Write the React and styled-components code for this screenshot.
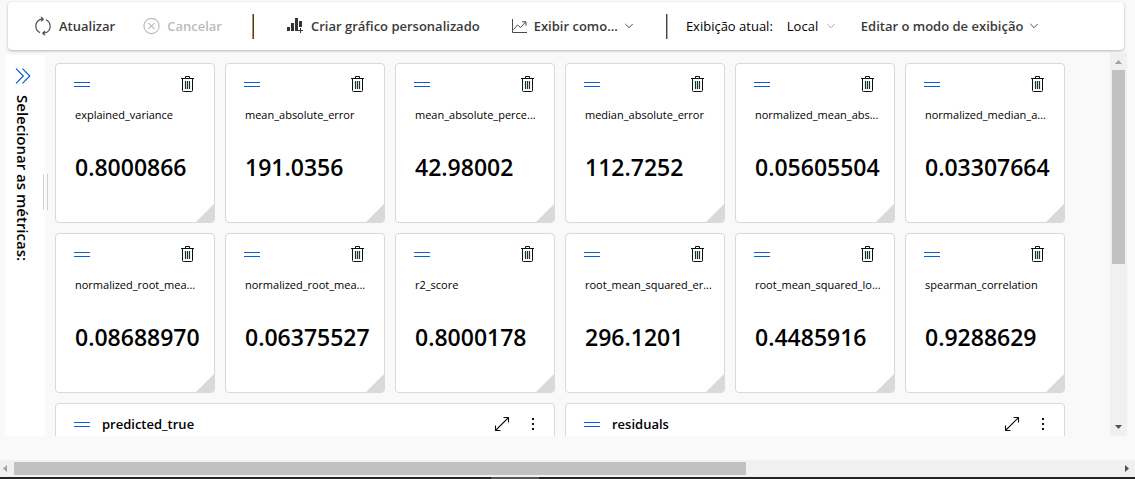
import React from "react";
import styled, { createGlobalStyle } from "styled-components";

const GlobalStyle = createGlobalStyle`
  * { box-sizing: border-box; }
  body {
    margin: 0;
    background: #f9f9f9;
    color: #000;
    font-family: "Open Sans", "Noto Sans", sans-serif;
    font-size: 13px;
    line-height: 20px;
  }
  button, select { font: inherit; color: inherit; }
  svg { display: block; flex: none; }
`;

const Page = styled.div`
  height: 100vh;
  display: flex;
  flex-direction: column;
  overflow: hidden;
`;

const Toolbar = styled.header`
  flex: none;
  display: flex;
  align-items: center;
  height: 48px;
  margin: 2px 11px 3px 8px;
  padding-left: 26px;
  background: #fff;
  border-radius: 4px;
  box-shadow: 0 1px 3px rgba(0, 0, 0, 0.28);
  white-space: nowrap;
`;

const Command = styled.button`
  display: flex;
  align-items: center;
  gap: 7px;
  margin: 0 ${(p) => p.$after || 0}px 0 0;
  padding: 0;
  border: 0;
  background: none;
  color: #3b3a39;
  font-weight: 600;
  &:disabled { color: #bdbbb9; }
`;

const Divider = styled.span`
  width: 2px;
  height: 25px;
  margin-right: ${(p) => p.$after}px;
  border-left: 1px solid ${(p) => p.$left};
  border-right: 1px solid ${(p) => p.$right};
`;

const ViewLabel = styled.label`
  margin-right: 14px;
`;

const ViewPicker = styled.span`
  display: flex;
  align-items: center;
  gap: 8px;
  margin-right: 26px;
  color: #a19f9d;
`;

const ViewSelect = styled.select`
  appearance: none;
  padding: 0;
  border: 0;
  background: none;
  color: #000;
`;

const Workspace = styled.div`
  flex: 1;
  min-height: 0;
  display: flex;
  margin: 0 8px 24px 5px;
`;

const Sidebar = styled.aside`
  position: relative;
  flex: none;
  width: 40px;
  margin-top: 2px;
  background: #fff;
  display: flex;
  flex-direction: column;
  align-items: flex-start;
  padding: 13px 0 0 10px;
  gap: 11px;
`;

const ExpandButton = styled.button`
  padding: 0;
  border: 0;
  background: none;
`;

const SidebarTitle = styled.h2`
  margin: 0;
  writing-mode: vertical-rl;
  font-size: 15px;
  line-height: 16px;
  font-weight: 600;
  white-space: nowrap;
`;

const ResizeGrip = styled.span`
  position: absolute;
  right: -3px;
  top: 119px;
  width: 5px;
  height: 36px;
  border: solid #d0d0d0;
  border-width: 0 1px;
`;

const Board = styled.main`
  flex: 1;
  min-width: 0;
  overflow: hidden;
  padding: 10px 0 0 10px;
`;

const CardGrid = styled.div`
  display: grid;
  grid-template-columns: repeat(auto-fill, 160px);
  grid-auto-rows: 160px;
  gap: 10px;
`;

const Card = styled.article`
  position: relative;
  grid-column: span ${(p) => p.$span || 1};
  min-width: 0;
  padding: 10px 10px 0 18px;
  background: #fff;
  border: 1px solid #d9d9d9;
  border-radius: 4px;
  overflow: hidden;
`;

const CardHeader = styled.div`
  display: flex;
  align-items: center;
  height: 20px;
`;

const CardActions = styled.div`
  display: flex;
  gap: 9px;
  margin-left: auto;
  padding-right: ${(p) => p.$inset || 0}px;
`;

const IconButton = styled.button`
  display: flex;
  align-items: center;
  justify-content: center;
  width: 22px;
  height: 20px;
  padding: 0;
  border: 0;
  background: none;
`;

const DragHandle = styled.span`
  width: 16px;
  height: 5px;
  border: solid #0b5cd6;
  border-width: 1px 0;
`;

const MetricName = styled.h3`
  margin: 11px 0 0 1px;
  font-size: 11px;
  line-height: 20px;
  font-weight: 400;
  white-space: nowrap;
`;

const MetricValue = styled.p`
  margin: 26px 0 0 1px;
  font-size: 23px;
  line-height: 32px;
  font-weight: 600;
`;

const ChartName = styled.h3`
  margin: 0 0 0 12px;
  font-size: 13px;
  line-height: 20px;
  font-weight: 600;
`;

const CornerGrip = styled.span`
  position: absolute;
  right: 0;
  bottom: 0;
  width: 18px;
  height: 18px;
  background: #d9d9d9;
  clip-path: polygon(100% 0, 100% 100%, 0 100%);
`;

const VerticalScroll = styled.div`
  flex: none;
  width: 17px;
  display: flex;
  flex-direction: column;
  align-items: center;
  justify-content: space-between;
  background: #f0f0f0;
  padding: 7px 0;
`;

const VerticalThumb = styled.span`
  width: 13px;
  height: 194px;
  margin: 6px 0 auto;
  background: #c1c1c1;
`;

const HorizontalScroll = styled.div`
  flex: none;
  height: 17px;
  display: flex;
  align-items: center;
  background: #f0f0f0;
  padding: 0 6px 0 3px;
`;

const HorizontalThumb = styled.span`
  width: 65%;
  height: 13px;
  margin: 0 auto 0 7px;
  background: #c1c1c1;
`;

const BottomEdge = styled.div`
  flex: none;
  height: 2px;
  background: #242424;
  display: flex;
  justify-content: center;
  padding-right: 106px;
`;

const EdgeMark = styled.span`
  width: 48px;
  background: #555;
`;

const RefreshIcon = () => (
  <svg width="18" height="20" viewBox="0 0 18 20" fill="none" stroke="#4a4a4a" strokeWidth="1.2">
    <path d="M6 16.6A7.2 7.2 0 0 1 4.500 4.500Q6 3.200 8.800 3.200M7 1l2.200 2.200L7 5.400" />
    <path d="M12 3.800A7.2 7.2 0 0 1 13.500 15.900Q12 17.200 9.200 17.200M11 15l-2.200 2.200 2.200 2.200" />
  </svg>
);

const CancelIcon = () => (
  <svg width="17" height="18" viewBox="0 0 17 18" fill="none" stroke="#bdbbb9" strokeWidth="1.1">
    <circle cx="8.500" cy="9" r="7.600" />
    <path d="M5.300 5.800l6.400 6.400M11.700 5.800l-6.400 6.400" />
  </svg>
);

const AddChartIcon = () => (
  <svg width="17" height="18" viewBox="0 0 17 18" fill="#333">
    <path d="M0 10h3v4H0zM4 6h3v8H4zM8 1h3v13H8zM12 4h3v6h-3zM13 11h1v2h2v1h-2v2h-1v-2h-2v-1h2z" />
  </svg>
);

const LineChartIcon = () => (
  <svg width="15" height="14" viewBox="0 0 15 14" fill="none" stroke="#4a4a4a">
    <path d="M.5 0v13.500H15M1.500 10.500L5.500 6l3 2.500L13.700 3M10 2.800h4v4" />
  </svg>
);

const ChevronIcon = () => (
  <svg width="8" height="6" viewBox="0 0 8 6" fill="none" stroke="currentColor" strokeWidth="0.9">
    <path d="M.3 1L4 4.700 7.700 1" />
  </svg>
);

const ExpandIcon = () => (
  <svg width="16" height="16" viewBox="0 0 16 16" fill="none" stroke="#0b5cd6" strokeWidth="1.2">
    <path d="M1 .7L8.300 8 1 15.300M7.500 .7L14.800 8 7.500 15.300" />
  </svg>
);

const TrashIcon = () => (
  <svg width="13" height="16" viewBox="0 0 13 16" fill="none" stroke="#111">
    <path d="M0 2.500h13M4.500 2.500v-2h4v2M1.500 2.500v12q0 1 1 1h8q1 0 1-1v-12" />
    <path stroke="#153a22" strokeWidth="1.2" d="M4.500 5v8M6.500 5v8M8.500 5v8" />
  </svg>
);

const EnlargeIcon = () => (
  <svg width="16" height="16" viewBox="0 0 16 16" fill="none" stroke="#111" strokeWidth="1.1">
    <path d="M1.500 14.500l13-13M9.500 1.500h5v5M1.500 9.500v5h5" />
  </svg>
);

const MoreIcon = () => (
  <svg width="4" height="14" viewBox="0 0 4 14" fill="#111">
    <path d="M1 1h2v2H1zM1 6h2v2H1zM1 11h2v2H1z" />
  </svg>
);

const arrows = {
  up: ["7", "4", "M0 4L3.500 0 7 4z", "#a3a3a3"],
  down: ["7", "4", "M0 0h7L3.500 4z", "#505050"],
  left: ["4", "7", "M4 0v7L0 3.500z", "#a3a3a3"],
  right: ["4", "7", "M0 0v7L4 3.500z", "#505050"],
};

const ScrollArrow = ({ to }) => {
  const [w, h, d, fill] = arrows[to];
  return (
    <svg width={w} height={h} viewBox={`0 0 ${w} ${h}`}>
      <path d={d} fill={fill} />
    </svg>
  );
};

const metrics = [
  ["explained_variance", "0.8000866"],
  ["mean_absolute_error", "191.0356"],
  ["mean_absolute_perce...", "42.98002"],
  ["median_absolute_error", "112.7252"],
  ["normalized_mean_abs...", "0.05605504"],
  ["normalized_median_a...", "0.03307664"],
  ["normalized_root_mea...", "0.08688970"],
  ["normalized_root_mea...", "0.06375527"],
  ["r2_score", "0.8000178"],
  ["root_mean_squared_er...", "296.1201"],
  ["root_mean_squared_lo...", "0.4485916"],
  ["spearman_correlation", "0.9288629"],
];

const charts = ["predicted_true", "residuals"];

export default function App() {
  return (
    <Page>
      <GlobalStyle />
      <Toolbar>
        <Command $after={28}>
          <RefreshIcon />
          Atualizar
        </Command>
        <Command $after={30} disabled>
          <CancelIcon />
          Cancelar
        </Command>
        <Divider $left="#e08a1e" $right="#24456e" $after={33} />
        <Command $after={32}>
          <AddChartIcon />
          Criar gráfico personalizado
        </Command>
        <Command $after={33}>
          <LineChartIcon />
          Exibir como...
          <ChevronIcon />
        </Command>
        <Divider $left="#7a3210" $right="#7fbcf5" $after={18} />
        <ViewLabel htmlFor="view">Exibição atual:</ViewLabel>
        <ViewPicker>
          <ViewSelect id="view">
            <option>Local</option>
          </ViewSelect>
          <ChevronIcon />
        </ViewPicker>
        <Command>
          Editar o modo de exibição
          <ChevronIcon />
        </Command>
      </Toolbar>
      <Workspace>
        <Sidebar>
          <ExpandButton aria-label="Expandir">
            <ExpandIcon />
          </ExpandButton>
          <SidebarTitle>Selecionar as métricas:</SidebarTitle>
          <ResizeGrip />
        </Sidebar>
        <Board>
          <CardGrid>
            {metrics.map(([name, value]) => (
              <Card key={value}>
                <CardHeader>
                  <DragHandle />
                  <CardActions $inset={6}>
                    <IconButton aria-label="Excluir">
                      <TrashIcon />
                    </IconButton>
                  </CardActions>
                </CardHeader>
                <MetricName>{name}</MetricName>
                <MetricValue>{value}</MetricValue>
                <CornerGrip />
              </Card>
            ))}
            {charts.map((name) => (
              <Card key={name} $span={3}>
                <CardHeader>
                  <DragHandle />
                  <ChartName>{name}</ChartName>
                  <CardActions>
                    <IconButton aria-label="Ampliar">
                      <EnlargeIcon />
                    </IconButton>
                    <IconButton aria-label="Mais opções">
                      <MoreIcon />
                    </IconButton>
                  </CardActions>
                </CardHeader>
              </Card>
            ))}
          </CardGrid>
        </Board>
        <VerticalScroll>
          <ScrollArrow to="up" />
          <VerticalThumb />
          <ScrollArrow to="down" />
        </VerticalScroll>
      </Workspace>
      <HorizontalScroll>
        <ScrollArrow to="left" />
        <HorizontalThumb />
        <ScrollArrow to="right" />
      </HorizontalScroll>
      <BottomEdge>
        <EdgeMark />
      </BottomEdge>
    </Page>
  );
}
